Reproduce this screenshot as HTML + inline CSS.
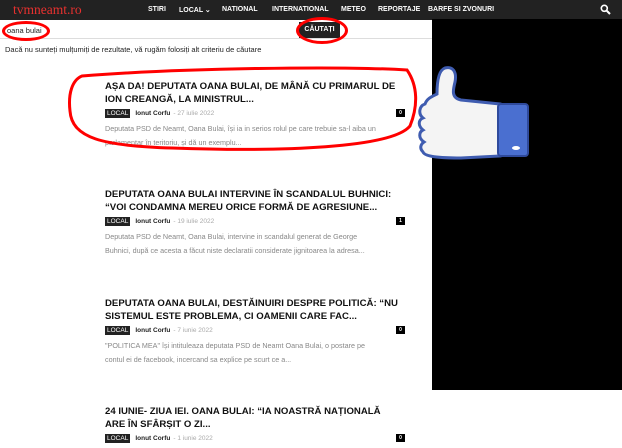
<!DOCTYPE html>
<html><head><meta charset="utf-8"><style>
*{margin:0;padding:0;box-sizing:border-box}
body{width:622px;height:448px;overflow:hidden;background:#fff;font-family:"Liberation Sans",sans-serif;position:relative}
.hdr{position:absolute;left:0;top:0;width:622px;height:20px;background:#222}
.logo{position:absolute;left:13px;top:2px;color:#e8312f;font-family:"Liberation Serif",serif;font-size:13.5px}
.nav{position:absolute;top:6px;color:#fff;font-size:7px;font-weight:bold;white-space:nowrap}
.blk{position:absolute;left:432px;top:19px;width:190px;height:371px;background:#000}
.search{position:absolute;left:0;top:20px;width:432px;height:19px;border-bottom:1px solid #ddd}
.q{position:absolute;left:7px;top:26px;font-size:7.5px;color:#222}
.btn{position:absolute;left:299px;top:22px;width:41px;height:16px;background:#222;color:#fff;font-size:7px;font-weight:bold;text-align:center;line-height:16px}
.note{position:absolute;left:5px;top:45px;font-size:7.5px;color:#222}
.t{position:absolute;left:105px;font-size:9.6px;font-weight:bold;color:#111;line-height:13px;white-space:nowrap}
.m{position:absolute;left:105px;font-size:6.5px;white-space:nowrap;height:9px}
.m .c{display:inline-block;background:#222;color:#fff;padding:0 2px;line-height:9px;margin-right:5px}
.m b{color:#222;margin-right:3px}
.m span.d{color:#aaa}
.cm{position:absolute;left:396px;width:9px;height:8px;background:#000;color:#fff;font-size:5px;font-weight:bold;text-align:center;line-height:8px}
.e{position:absolute;left:105px;font-size:7.2px;color:#888;line-height:14px;white-space:nowrap}
.ring{position:absolute;border:3px solid #f00;border-radius:50%}
</style></head><body>
<div class="hdr"></div>
<div class="logo">tvmneamt.ro</div>
<div class="nav" style="left:148px">STIRI</div>
<div class="nav" style="left:179px">LOCAL ⌄</div>
<div class="nav" style="left:222px">NATIONAL</div>
<div class="nav" style="left:272px">INTERNATIONAL</div>
<div class="nav" style="left:341px">METEO</div>
<div class="nav" style="left:378px">REPORTAJE</div>
<div class="nav" style="left:428px">BARFE SI ZVONURI</div>
<svg style="position:absolute;left:600px;top:4px" width="11" height="11" viewBox="0 0 11 11"><circle cx="4.3" cy="4.3" r="3" fill="none" stroke="#fff" stroke-width="1.6"/><path d="M6.5 6.5L10 10" stroke="#fff" stroke-width="2"/></svg>
<div class="blk"></div>
<div class="search"></div>
<div class="q">oana bulai</div>
<div class="btn">CĂUTAȚI</div>
<div class="note">Dacă nu sunteți mulțumiți de rezultate, vă rugăm folosiți alt criteriu de căutare</div>
<div class="ring" style="left:2px;top:21px;width:48px;height:20px"></div>
<div class="ring" style="left:296px;top:17px;width:52px;height:27px"></div>

<div class="t" style="top:80px">AȘA DA! DEPUTATA OANA BULAI, DE MÂNĂ CU PRIMARUL DE<br>ION CREANGĂ, LA MINISTRUL...</div>
<div class="m" style="top:109px"><span class="c">LOCAL</span><b>Ionut Corfu</b><span class="d">- 27 iulie 2022</span></div>
<div class="cm" style="top:109px">0</div>
<div class="e" style="top:122px">Deputata PSD de Neamt, Oana Bulai, își ia in serios rolul pe care trebuie sa-l aiba un<br>parlamentar în teritoriu, și dă un exemplu...</div>
<svg style="position:absolute;left:62px;top:66px" width="360" height="90"><path d="M20 10 C120 2 280 0 345 4 C356 20 356 40 348 60 C330 82 220 86 110 82 C40 80 10 72 8 45 C6 28 10 14 20 10 Z" fill="none" stroke="#f00" stroke-width="3"/></svg>

<div class="t" style="top:188px">DEPUTATA OANA BULAI INTERVINE ÎN SCANDALUL BUHNICI:<br>“VOI CONDAMNA MEREU ORICE FORMĂ DE AGRESIUNE...</div>
<div class="m" style="top:217px"><span class="c">LOCAL</span><b>Ionut Corfu</b><span class="d">- 19 iulie 2022</span></div>
<div class="cm" style="top:217px">1</div>
<div class="e" style="top:230px">Deputata PSD de Neamt, Oana Bulai, intervine in scandalul generat de George<br>Buhnici, după ce acesta a făcut niste declaratii considerate jignitoarea la adresa...</div>

<div class="t" style="top:297px">DEPUTATA OANA BULAI, DESTĂINUIRI DESPRE POLITICĂ: “NU<br>SISTEMUL ESTE PROBLEMA, CI OAMENII CARE FAC...</div>
<div class="m" style="top:326px"><span class="c">LOCAL</span><b>Ionut Corfu</b><span class="d">- 7 iunie 2022</span></div>
<div class="cm" style="top:326px">0</div>
<div class="e" style="top:339px">"POLITICA MEA" își intituleaza deputata PSD de Neamt Oana Bulai, o postare pe<br>contul ei de facebook, incercand sa explice pe scurt ce a...</div>

<div class="t" style="top:405px">24 IUNIE- ZIUA IEI. OANA BULAI: “IA NOASTRĂ NAȚIONALĂ<br>ARE ÎN SFÂRȘIT O ZI...</div>
<div class="m" style="top:434px"><span class="c">LOCAL</span><b>Ionut Corfu</b><span class="d">- 1 iunie 2022</span></div>
<div class="cm" style="top:434px">0</div>

<svg style="position:absolute;left:415px;top:66px" width="115" height="96" viewBox="0 0 115 96">
<path d="M22 28 C22 14 24 4 30 2 C38 0 42 6 40 16 C38 24 36 32 46 34 L85 38 L85 90 L46 92 C36 92 10 92 8 86 C4 82 6 78 9 76 C3 72 4 66 8 64 C3 60 3 54 8 52 C3 48 4 40 10 38 C12 32 18 30 22 28 Z" fill="#f4f4f4" stroke="#3f5cb0" stroke-width="3"/>
<rect x="83" y="38" width="30" height="52" rx="3" fill="#4a6fd0" stroke="#2f4a9c" stroke-width="2"/>
<ellipse cx="101" cy="82" rx="4" ry="2" fill="#fff"/>
</svg>
</body></html>
